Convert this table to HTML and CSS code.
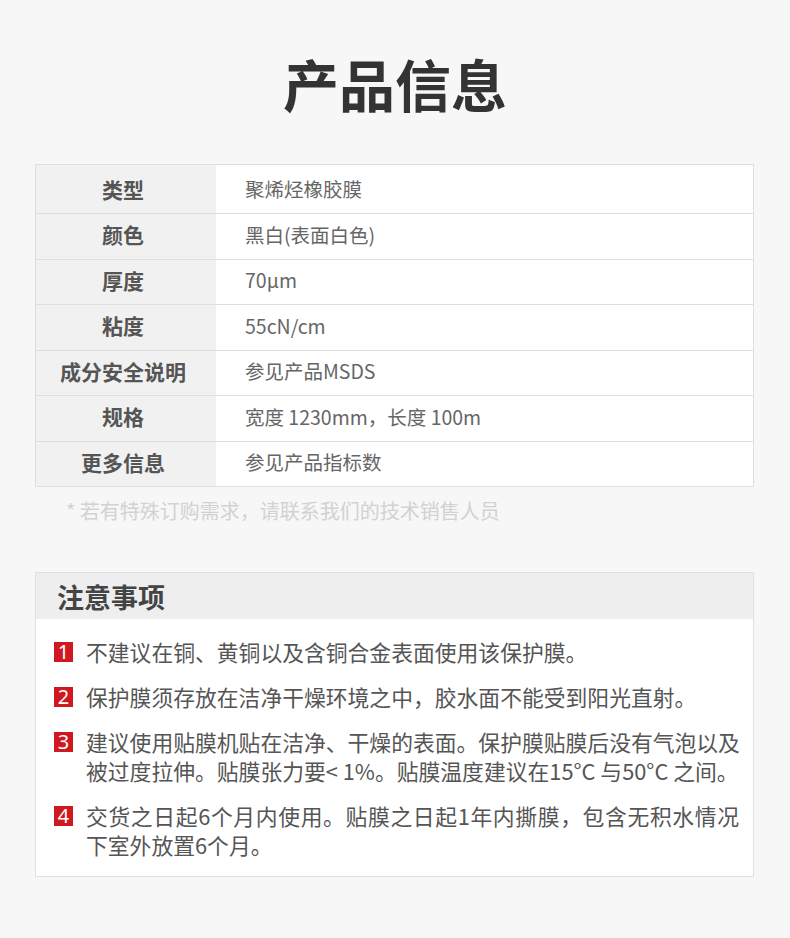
FILE: index.html
```html
<!DOCTYPE html>
<html lang="zh-CN">
<head>
    <meta charset="UTF-8">
    <title>产品信息</title>
    <link rel="stylesheet" href="styles.css">
</head>
<body>
<div class="page">
    <h1 class="title">产品信息</h1>

    <!--参数表-->
    <div class="spec">
        <div class="row first">
            <div class="label">类型</div>
            <div class="value">聚烯烃橡胶膜</div>
        </div>
        <div class="row">
            <div class="label">颜色</div>
            <div class="value">黑白(表面白色)</div>
        </div>
        <div class="row">
            <div class="label">厚度</div>
            <div class="value">70μm</div>
        </div>
        <div class="row">
            <div class="label">粘度</div>
            <div class="value">55cN/cm</div>
        </div>
        <div class="row">
            <div class="label">成分安全说明</div>
            <div class="value">参见产品MSDS</div>
        </div>
        <div class="row">
            <div class="label">规格</div>
            <div class="value">宽度 1230mm，长度 100m</div>
        </div>
        <div class="row">
            <div class="label">更多信息</div>
            <div class="value">参见产品指标数</div>
        </div>
    </div>
    <p class="tip">* 若有特殊订购需求，请联系我们的技术销售人员</p>

    <!--注意事项-->
    <div class="notice">
        <div class="notice-head">注意事项</div>
        <ul class="notice-list">
            <li><span class="num">1</span><p>不建议在铜、黄铜以及含铜合金表面使用该保护膜。</p></li>
            <li><span class="num">2</span><p>保护膜须存放在洁净干燥环境之中，胶水面不能受到阳光直射。</p></li>
            <li><span class="num">3</span><p><span class="line full">建议使用贴膜机贴在洁净、干燥的表面。保护膜贴膜后没有气泡以及</span><span class="line">被过度拉伸。贴膜张力要&lt; 1%。贴膜温度建议在15°C 与50°C 之间。</span></p></li>
            <li><span class="num">4</span><p><span class="line full">交货之日起6个月内使用。贴膜之日起1年内撕膜，包含无积水情况</span><span class="line">下室外放置6个月。</span></p></li>
        </ul>
    </div>
</div>
</body>
</html>
```

FILE: styles.css
```css
* {
    margin: 0;
    padding: 0;
}

ul {
    list-style: none;
}

body {
    background-color: #f7f7f7;
    font-family: "Noto Sans CJK SC", "Noto Sans", sans-serif;
    color: #555;
}

.page {
    width: 790px;
    height: 938px;
    padding-top: 55px;
    box-sizing: border-box;
}

.title {
    height: 56px;
    line-height: 56px;
    font-size: 56px;
    font-weight: 700;
    color: #333;
    text-align: center;
}

.spec {
    margin: 53px 36px 0 35px;
    border: 1px solid #dedede;
    background-color: #fff;
}

.row {
    display: flex;
    height: 44.5px;
    border-top: 1px solid #dedede;
}

.row.first {
    height: 48px;
    border-top: none;
}

.label {
    width: 180px;
    flex-shrink: 0;
    background-color: #f1f1f1;
    display: flex;
    align-items: center;
    justify-content: center;
    padding-bottom: 4px;
    box-sizing: border-box;
    font-size: 21px;
    font-weight: 700;
    color: #555;
    text-indent: -6px;
}

.row.first .label,
.row.first .value {
    padding-bottom: 1px;
}

.value {
    display: flex;
    align-items: center;
    padding-left: 29px;
    padding-bottom: 4px;
    box-sizing: border-box;
    font-size: 19.5px;
    color: #666;
}

.tip {
    margin: 11px 0 0 66px;
    line-height: 26px;
    font-size: 20px;
    color: #d2d2d2;
}

.notice {
    margin: 48px 36px 0 35px;
    border: 1px solid #e0e0e0;
    background-color: #fff;
}

.notice-head {
    height: 46px;
    line-height: 48px;
    padding-left: 21px;
    background-color: #eeeeee;
    font-size: 27px;
    font-weight: 700;
    color: #444;
}

.notice-list {
    padding: 18px 0 17px 18px;
}

.notice-list li {
    display: flex;
    align-items: flex-start;
    margin-bottom: 16px;
}

.notice-list li:last-child {
    margin-bottom: 0;
}

.num {
    width: 19px;
    height: 20px;
    margin-top: 5px;
    margin-right: 13px;
    flex-shrink: 0;
    background-color: #cf1820;
    color: #fff;
    font-family: "Noto Sans", "DejaVu Sans", sans-serif;
    font-size: 20px;
    line-height: 20px;
    text-align: center;
}

.notice-list p {
    width: 653px;
    font-size: 21.8px;
    line-height: 29px;
    color: #555;
    white-space: nowrap;
}

.line {
    display: block;
}

.line.full {
    text-align: justify;
    text-align-last: justify;
}
```
